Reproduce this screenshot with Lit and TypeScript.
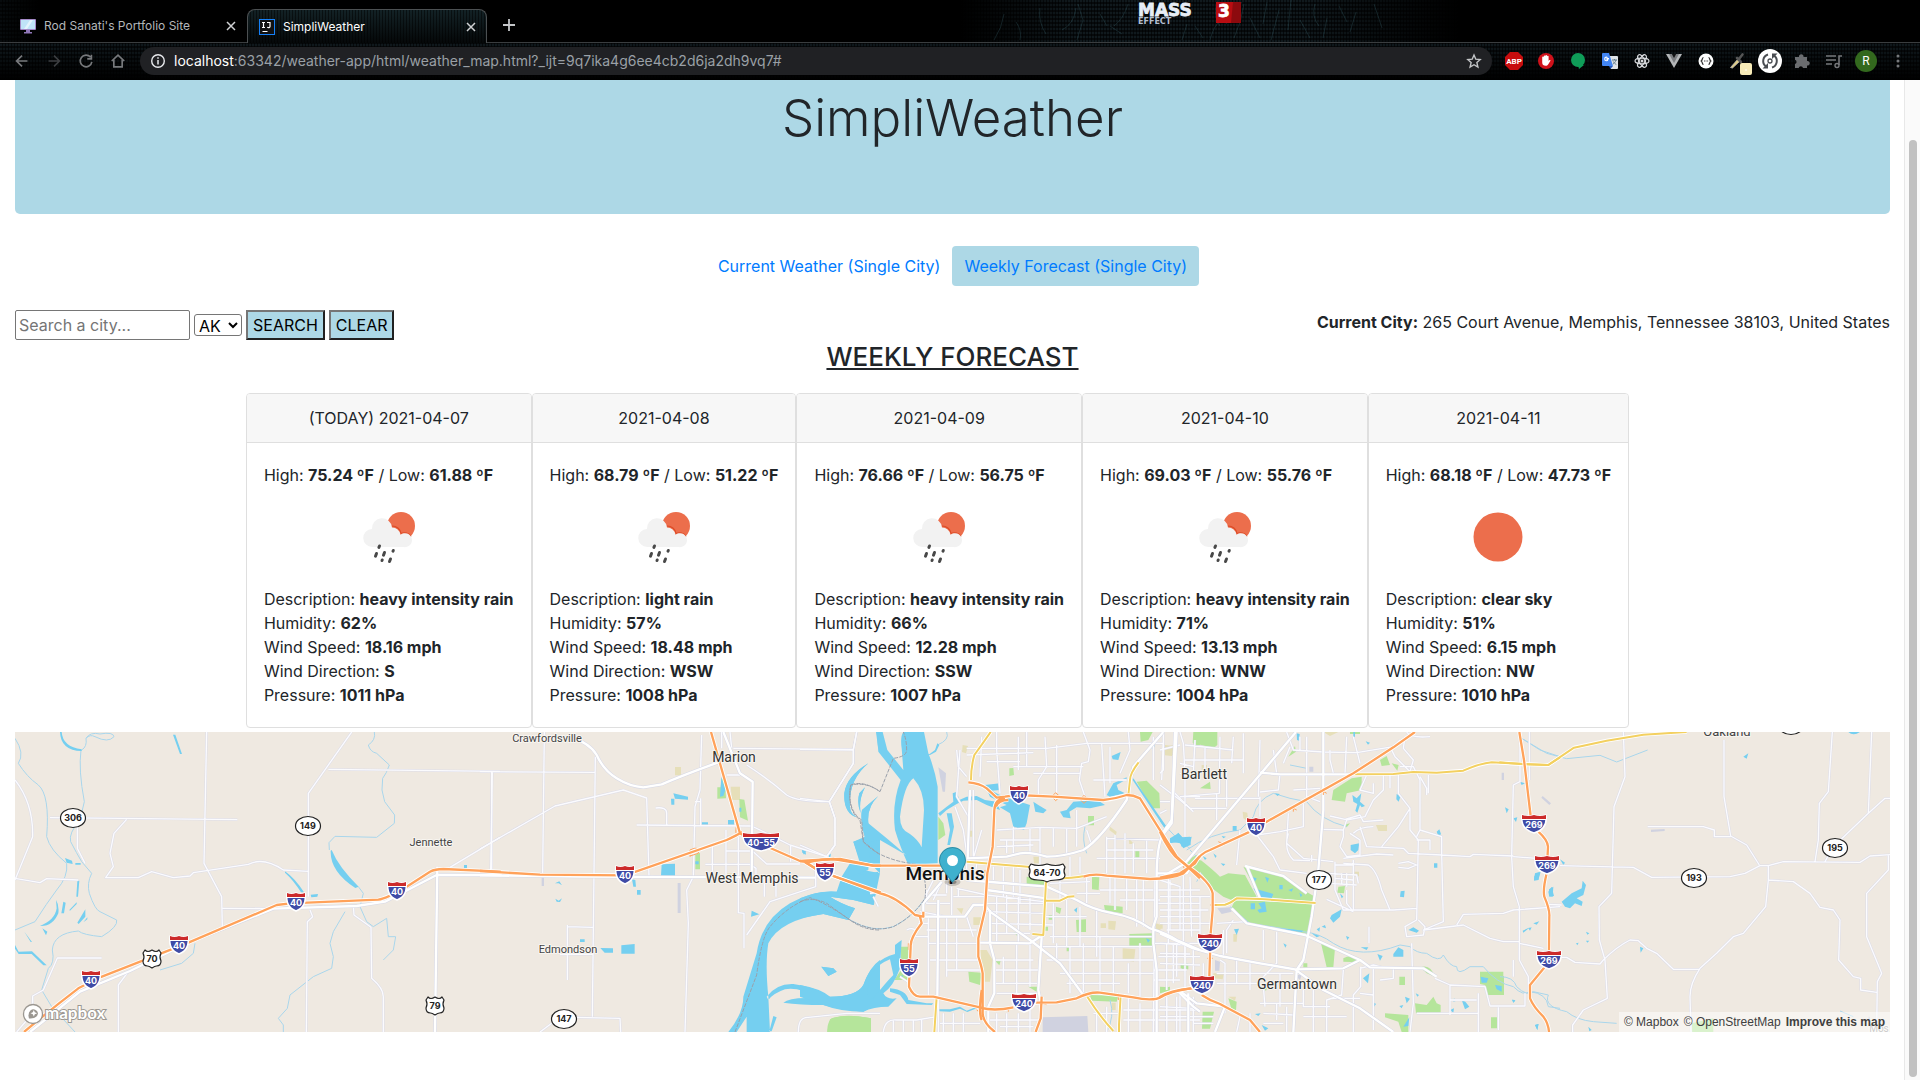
import { LitElement, html, svg, css } from "lit";
import { customElement } from "lit/decorators.js";
import { classMap } from "lit/directives/class-map.js";

interface Day {
  title: string;
  high: string;
  low: string;
  icon: "rain" | "sun";
  description: string;
  humidity: string;
  wind: string;
  direction: string;
  pressure: string;
}

const DAYS: Day[] = [
  { title: "(TODAY) 2021-04-07", high: "75.24", low: "61.88", icon: "rain", description: "heavy intensity rain", humidity: "62%", wind: "18.16 mph", direction: "S", pressure: "1011 hPa" },
  { title: "2021-04-08", high: "68.79", low: "51.22", icon: "rain", description: "light rain", humidity: "57%", wind: "18.48 mph", direction: "WSW", pressure: "1008 hPa" },
  { title: "2021-04-09", high: "76.66", low: "56.75", icon: "rain", description: "heavy intensity rain", humidity: "66%", wind: "12.28 mph", direction: "SSW", pressure: "1007 hPa" },
  { title: "2021-04-10", high: "69.03", low: "55.76", icon: "rain", description: "heavy intensity rain", humidity: "71%", wind: "13.13 mph", direction: "WNW", pressure: "1004 hPa" },
  { title: "2021-04-11", high: "68.18", low: "47.73", icon: "sun", description: "clear sky", humidity: "51%", wind: "6.15 mph", direction: "NW", pressure: "1010 hPa" },
];

/* ---------- Browser frame ---------- */

const EXTENSIONS = [
  { label: "Adblock Plus", art: svg`<path d="M7 3h8l5 5v8l-5 5H7l-5-5V8z" transform="translate(1 0)" fill="#c70d0e"/><text x="12" y="15" text-anchor="middle" font-family="Roboto, sans-serif" font-weight="700" font-size="8" fill="#fff">ABP</text>` },
  { label: "AdBlock", art: svg`<circle cx="12" cy="12" r="8" fill="#d0121b"/><path d="M8.200 12V8.200a.8.8 0 0 1 1.600 0V7.300a.8.8 0 0 1 1.600 0v-.5a.8.8 0 0 1 1.600 0v.8a.8.8 0 0 1 1.600 0v4.400l.8-.9c.8-.5 1.300.2.9.8l-2.200 3.600c-.5.9-1.200 1.200-2.400 1.200-2.200 0-3.500-1.200-3.500-3.300z" fill="#fff"/>` },
  { label: "Hangouts", art: svg`<circle cx="12" cy="11" r="7" fill="#0f9d58"/><path d="M12 16h6l-5 4z" fill="#0f9d58"/>` },
  { label: "Google Translate", art: svg`<path d="M9 7h10a1 1 0 0 1 1 1v11a1 1 0 0 1-1 1h-6z" fill="#dfe3e8"/><path d="M5 4h6l4 13H5a1 1 0 0 1-1-1V5a1 1 0 0 1 1-1z" fill="#4285f4"/><path d="M11 17h4l-2.500 3z" fill="#2456b8"/><path d="M11 9.500H9v1h.9c-.2.8-.7 1.200-1.500 1.200-1 0-1.700-.8-1.700-1.800s.7-1.800 1.700-1.800c.4 0 .8.2 1.100.5" fill="none" stroke="#fff" stroke-width="1.100"/><path d="M14 11h5M16.500 10v1M18 11c-.5 2-2 3.500-3.200 4.200M15.300 12.500c.6 1.300 2 2.500 3 3" fill="none" stroke="#5f7a8a"/>` },
  { label: "React Developer Tools", art: svg`<g fill="none" stroke="#d8dadd" stroke-width="1.200"><ellipse cx="12" cy="12" rx="7" ry="2.800"/><ellipse cx="12" cy="12" rx="7" ry="2.800" transform="rotate(60 12 12)"/><ellipse cx="12" cy="12" rx="7" ry="2.800" transform="rotate(120 12 12)"/></g><circle cx="12" cy="12" r="1.500" fill="#d8dadd"/>` },
  { label: "Vue.js devtools", art: svg`<path d="M4 5h16l-8 14z" fill="#b4b6b8"/><path d="M7 5h10l-5 9z" fill="#7b7d80"/><path d="M9.800 5h4.400L12 9z" fill="#111"/>` },
  { label: "JSON Formatter", art: svg`<circle cx="12" cy="12" r="7.500" fill="#fff"/><path d="M9.500 8.500c-1.500 0-.8 2.500-2.300 3.500 1.500 1 .8 3.500 2.300 3.500M14.500 8.500c1.500 0 .8 2.500 2.300 3.500-1.500 1-.8 3.500-2.300 3.500" fill="none" stroke="#333" stroke-width="1.200"/><path d="M10 12h.9M11.600 12h.9M13.200 12h.9" stroke="#333"/>` },
  { label: "Eye dropper", art: svg`<path d="m4.500 18.500 7-8 2 2-7 6.500z" fill="#e3cf85" stroke="#bbb" stroke-width=".8"/><path d="m11 9 4 4M12.500 10.500l4-5" stroke="#555" stroke-width="2.600" stroke-linecap="round"/><rect x="14" y="14" width="12" height="12" rx="2" fill="#f8ecb8"/><path d="M19 21h2" stroke="#fff"/>` },
  { label: "Session restore", art: svg`<circle cx="12" cy="12" r="12" fill="#fff"/><g fill="none" stroke="#4a4d52" stroke-width="2"><path d="M10 5.500a6.800 6.800 0 0 0-2 12M14 18.500a6.800 6.800 0 0 0 2-12"/></g><path d="M4.500 19.500H10V14zM19.500 4.500H14V10z" fill="#4a4d52"/><circle cx="12" cy="12" r="2" fill="none" stroke="#4a4d52" stroke-width="1.300"/>` },
  { label: "Extensions", art: svg`<path d="M5 8h4a2.300 2.300 0 1 1 4.500 0H17v4a2.300 2.300 0 1 1 0 4.500V19h-4a2.200 2.200 0 0 0-4.300 0H5v-4a2.200 2.200 0 0 0 0-4.200z" fill="#6b6d70"/>` },
  { label: "Media controls", art: svg`<path d="M4 7h10M4 11h10M4 15h6" stroke="#77797c" stroke-width="1.600"/><path d="M17 16V7h3" fill="none" stroke="#77797c" stroke-width="1.600"/><circle cx="15" cy="16.500" r="2" fill="none" stroke="#77797c" stroke-width="1.400"/>` },
  { label: "Profile", art: svg`<circle cx="12" cy="12" r="11" fill="#33691e"/><text x="12" y="16" text-anchor="middle" font-family="Roboto, sans-serif" font-size="12" fill="#fff">R</text>` },
  { label: "Menu", art: svg`<g fill="#77797c"><circle cx="12" cy="7" r="1.500"/><circle cx="12" cy="12" r="1.500"/><circle cx="12" cy="17" r="1.500"/></g>` },
];

const NAVIGATION = [
  { label: "Back", color: "#77797c", d: "M18.500 12H6M12 5.500 5.500 12l6.500 6.500" },
  { label: "Forward", color: "#3c3e41", d: "M5.500 12H18M12 5.500l6.500 6.500-6.500 6.500" },
  { label: "Reload", color: "#77797c", d: "M17.500 7.500A7 7 0 1 0 19 13M18.500 4.500v5h-5" },
  { label: "Home", color: "#77797c", d: "M4.500 12 12 5l7.500 7M7 10.500V19h10v-8.500" },
];

@customElement("browser-frame")
class BrowserFrame extends LitElement {
  static styles = css`
    :host { display: block; font-family: Inter, "Liberation Sans", sans-serif; color: #e8eaed; }
    .frame {
      position: relative;
      background:
        linear-gradient(90deg, rgba(0,0,0,.55), #000 2%, #000 50%, transparent 56%, transparent 68%, #000 76%) 0 0 / 100% 42px no-repeat,
        linear-gradient(#0000, #000) 0 43px / 100% 37px no-repeat,
        repeating-linear-gradient(90deg, #0000 0 2px, rgba(0,0,0,.6) 2px 3px),
        repeating-linear-gradient(#0000 0 2px, rgba(0,0,0,.6) 2px 4px),
        #10191d;
    }
    svg { display: block; }
    button { border: 0; background: none; padding: 0; font: inherit; color: inherit; }
    .scratches { position: absolute; right: 27%; top: 0; }
    .logo { position: absolute; left: 59%; top: 0; margin-left: 4px; }
    .tabs { position: relative; display: flex; align-items: flex-end; height: 42px; border-bottom: 1px solid #3a3d3f; }
    .tab { display: flex; align-items: center; box-sizing: border-box; width: 247px; height: 33px; padding: 0 10px 0 20px; gap: 8px; font-size: 12px; color: #b4b7ba; }
    .tab.active {
      width: 240px; height: 34px; padding: 0 9px 0 11px; margin-bottom: -1px; color: #fff;
      border: 1px solid #4c5052; border-bottom: 0; border-radius: 8px 8px 0 0;
      background: repeating-linear-gradient(90deg, #0000 0 2px, rgba(0,0,0,.5) 2px 3px), linear-gradient(#132226, #050809);
    }
    .title { flex: 1; white-space: nowrap; }
    .plus { margin: 0 0 10px 15px; }
    .toolbar { display: flex; align-items: center; height: 36px; padding: 0 6px 1px; }
    .item { display: grid; place-items: center; width: 32px; height: 36px; }
    .item svg { overflow: visible; }
    .address { flex: 1; min-width: 0; display: flex; align-items: center; gap: 8px; height: 28px; margin: 0 6px; padding: 0 6px 0 10px; border-radius: 14px; background: #202124; }
    .url { flex: 1; min-width: 0; overflow: hidden; white-space: nowrap; font-size: 14px; color: #9aa0a6; }
    .host { color: #fff; }
  `;

  close() {
    return html`<button aria-label="Close tab"><svg width="12" height="12" viewBox="0 0 12 12"><path d="m2 2 8 8m0-8-8 8" stroke="#d0d2d4" stroke-width="1.500"/></svg></button>`;
  }

  render() {
    return html`
      <header class="frame">
        <svg class="scratches" width="420" height="42" viewBox="0 0 420 42" fill="none" stroke="#4d8793" stroke-opacity=".32" stroke-width=".7">
          <path d="M12 40q8-12 10-26M34 22q6 8 4 18M58 8q-2 14 6 26M80 30q12-6 14-22M96 4l5 16M101 20l-6 20M118 14l7 12M128 26l12 8M146 4q-4 14-14 22M205 24l-5 16M213 26l8 12M228 40q4-16 12-20M236 0q-6 14 2 26M244 24l16-22M262 4q-2 16-10 34M268 18l10 20M285 2l-4 22M297 10l-8 30M309 0l-3 30M318 20l10 18M333 4q-4 12 4 22M345 18l-4 20M357 6l8 16M374 12l-6 20M392 4l8 24" />
        </svg>
        <svg class="logo" width="110" height="28" viewBox="0 0 110 28" role="img" aria-label="Mass Effect 3">
          <rect x="79" y="2" width="25" height="21" fill="#b80d12" />
          <path d="M96 2h8v21h-10z" fill="#8c0a0e" />
          <g font-family="DejaVu Sans, sans-serif" font-weight="700">
            <text x="1" y="16" font-size="17" fill="#e8eef6" stroke="#e8eef6" stroke-width=".8">MASS</text>
            <text x="1" y="24" font-size="8" fill="#b4bfd0">EFFECT</text>
            <text x="81" y="17" font-size="17" fill="#fff" stroke="#fff" stroke-width=".8">3</text>
          </g>
        </svg>
        <div class="tabs">
          <div class="tab">
            <svg width="16" height="16" viewBox="0 0 16 16"><rect x="0" y="1" width="16" height="11" rx="1" fill="#a58ac8"/><rect x="1" y="2" width="14" height="9" fill="#bfe3f8"/><path d="M4 11 10 2h3L7 11z" fill="#e2f3fd"/><path d="M6 12h4v2h2v1.500H4V14h2z" fill="#9077b8"/></svg>
            <span class="title">Rod Sanati's Portfolio Site</span>${this.close()}
          </div>
          <div class="tab active">
            <svg width="16" height="16" viewBox="0 0 16 16"><rect x=".5" y=".5" width="15" height="15" fill="#111" stroke="#1580f8"/><path d="M3 3.500h3M4.500 3.500v5M3 8.500h3M8 3.500h3v4c0 1.200-1.500 1.500-2.800.8M3.500 12.500h5" fill="none" stroke="#fff" stroke-width="1.200"/></svg>
            <span class="title">SimpliWeather</span>${this.close()}
          </div>
          <button class="plus" aria-label="New tab"><svg width="14" height="14" viewBox="0 0 14 14"><path d="M7 1v12M1 7h12" stroke="#c4c6c8" stroke-width="1.800"/></svg></button>
        </div>
        <div class="toolbar">
          ${NAVIGATION.map((n) => html`<button class="item" aria-label=${n.label}><svg width="20" height="20" viewBox="0 0 24 24" fill="none" stroke=${n.color} stroke-width="2"><path d=${n.d} /></svg></button>`)}
          <div class="address">
            <svg width="16" height="16" viewBox="0 0 16 16"><circle cx="8" cy="8" r="6.300" fill="none" stroke="#e8eaed" stroke-width="1.400"/><path d="M8 7v4.500M8 4.300v1.500" stroke="#e8eaed" stroke-width="1.500"/></svg>
            <span class="url"><span class="host">localhost</span>:63342/weather-app/html/weather_map.html?_ijt=9q7ika4g6ee4cb2d6ja2dh9vq7#</span>
            <button aria-label="Bookmark this page"><svg width="24" height="24" viewBox="0 0 24 24"><path d="m12 6 1.800 4.200 4.400.4-3.300 3 1 4.400-3.900-2.300L8.100 18l1-4.400-3.300-3 4.400-.4z" fill="none" stroke="#c4c6c8" stroke-width="1.400"/></svg></button>
          </div>
          ${EXTENSIONS.map((e) => html`<button class="item" aria-label=${e.label}><svg width="24" height="24" viewBox="0 0 24 24">${e.art}</svg></button>`)}
        </div>
      </header>`;
  }
}

/* ---------- Forecast card ---------- */

@customElement("day-card")
class DayCard extends LitElement {
  static properties = { day: { attribute: false } };
  declare day: Day;

  static styles = css`
    :host { display: block; border: 1px solid #dfdfdf; border-radius: 4px; overflow: hidden; background: #fff; }
    .head { padding: 12px 16px; text-align: center; background: #f7f7f7; border-bottom: 1px solid #dfdfdf; }
    .body { padding: 20px 17px; white-space: nowrap; }
    .icon { display: block; margin: 0 auto; }
    b { font-weight: 700; }
  `;

  picture() {
    return this.day.icon === "sun"
      ? svg`<circle cx="50" cy="50" r="24.500" fill="#ec6e4c"/>`
      : svg`
        <circle cx="62" cy="39" r="14" fill="#ec6e4c"/>
        <path d="M53 39a9 9 0 0 1 9 7.500 8 8 0 0 1 10 3" fill="none" stroke="#dd4b26" stroke-width="1.200"/>
        <path d="M33.500 60a9 9 0 0 1-.5-18 9.800 9.800 0 0 1 20-1.500 8.500 8.500 0 0 1 8.500 7.300 7 7 0 1 1 3 12.200z" fill="#f2f2f2"/>
        <g stroke="#484848" stroke-width="3" stroke-linecap="round"><path d="m40.500 59-.6 1.400M37.500 66.500l-1 2.700M45.500 65.500l-1 2.700M54.300 63.500l-.3.700M43.200 73l-.2.500M51.500 72l-1 2.500"/></g>`;
  }

  render() {
    const d = this.day;
    return html`
      <div class="head">${d.title}</div>
      <div class="body">
        <div>High: <b>${d.high} ºF</b> / Low: <b>${d.low} ºF</b></div>
        <svg class="icon" width="100" height="100" viewBox="0 0 100 100" role="img" aria-label=${d.description}>${this.picture()}</svg>
        <div>Description: <b>${d.description}</b></div>
        <div>Humidity: <b>${d.humidity}</b></div>
        <div>Wind Speed: <b>${d.wind}</b></div>
        <div>Wind Direction: <b>${d.direction}</b></div>
        <div>Pressure: <b>${d.pressure}</b></div>
      </div>`;
  }
}

/* ---------- Map ---------- */

/* Each sheet is drawn at three units to the pixel, starting at its own x. */
interface Sheet {
  x: number;
  park?: string;
  sand?: string;
  grey?: string;
  water?: string;
  stream?: string;
  minor?: string;
  road?: string;
  trunk?: string;
  rail?: string;
  ramp?: string;
  motorway?: string;
}

const SHEETS: Sheet[] = [
  {
    x: 0,
    stream:
      "M45 25Q75 70 55 100Q80 140 115 165Q150 195 140 320Q150 360 200 400Q205 440 170 480Q140 520 105 575L45 600M243 60Q235 120 253 215L240 270Q205 310 212 335Q230 370 245 395L275 430Q260 460 268 490Q285 540 300 545L350 570Q355 590 305 620Q250 615 235 603Q160 610 157 660Q165 700 145 715L125 780L155 830L225 906M245 60Q262 50 258 25Q270 5 300 12Q340 5 342 20Q325 40 285 20Q270 12 258 25M1123 6Q1128 30 1105 45Q1110 65 1130 70L1168 105Q1160 130 1148 145L1146 180L1154 215L1184 255L1183 280L1130 322L1005 319L987 338L988 360M1075 470L1090 490L1080 530L1100 575L1120 590L1160 565L1165 620L1187 620L1180 660L1150 690M1035 545L1000 605L990 640L1000 680L995 715L940 740L870 795L862 835L835 865L850 885V906M585 640L580 670L545 700L480 720",
    water:
      "M180 6h5Q188 50 245 58V63Q182 62 180 6ZM519 14h7L546 72H540ZM855 424Q885 445 912 487L903 487Q880 450 855 428ZM995 360Q1015 410 1076 470L1066 474Q990 425 992 362ZM195 384 216 392 218 402 200 398ZM226 399h16v5h-16ZM232 452h6L234 500H229ZM168 510Q178 525 175 550Q158 590 120 588Q165 570 170 535ZM190 515 197 518 192 550 184 550ZM208 540 230 517 230 522 210 542ZM256 538 256 560 236 582 232 578ZM250 577 262 562 262 568ZM127 595 142 605 138 616ZM73 605 96 636 92 636ZM45 645 56 665 96 664 140 706 130 706 95 672 56 672 45 656ZM932 494 954 492 952 500 934 502ZM1392 405h9v9h-9Z",
    minor:
      "M45 150Q100 220 98 320L45 450M45 445L120 458L140 446L235 450M150 263L712 269M620 6L612 400L665 500L667 590M380 268L342 310L330 370L340 410L317 443L415 443L455 425L520 443L570 438L580 428L745 403Q790 380 850 420L925 424M1055 6L925 190V500M985 118L1500 124M1475 126V418M1350 412L1500 322M668 535L820 536M232 290V355L255 400M305 684H172L130 780L98 798V850L50 906M385 725L355 765V906M930 540L938 560L922 575L919 906M1060 525L1062 555L1113 592L1115 745Q1150 775 1150 800V906",
    road: "M90 906L240 785L390 723L560 640L820 536L1070 528L1155 515L1310 435H1505M1312 410L1305 906",
    motorway: "M72 906Q150 840 235 775L300 742L560 640L830 525L870 520L1135 509Q1160 505 1220 470L1290 425Q1305 417 1330 417L1502 425",
  },
  {
    x: 480,
    park:
      "M725 145 735 150 738 205 712 206 712 172 722 172ZM778 207 793 209 804 272 780 262ZM646 375 660 368V418H646ZM1055 865Q1100 850 1172 865V906H1042Q1040 880 1055 865Z",
    sand: "M752 170h28v40h-24ZM585 111h18v25h-18ZM738 430h18v10h-18Z",
    grey: "M593 459h9v90h-9ZM185 442h7v26h-7Z",
    water:
      "M580 190 624 200V209L585 206ZM573 206h10v18h-9ZM664 277h20v7h-20ZM744 270h18v14h-18ZM778 233h6v12h-6ZM724 140 730 160 736 180 730 198 720 200ZM646 394h10v9h-10ZM545 403 585 401V437H543ZM456 448 466 450 468 470 460 470ZM471 480h11v14h-11ZM300 628h14v8h-14ZM361 654 399 655V668H374ZM424 646 464 642V671H424ZM815 542 838 553 813 560ZM967 360 976 357 978 374 967 368ZM1045 375 1052 372 1050 384ZM225 460 238 454 246 466 236 460ZM226 506 236 512 246 505 240 516 230 515ZM1165 100Q1105 150 1110 230Q1110 250 1130 262Q1090 250 1093 190Q1098 140 1165 100ZM1155 172Q1135 210 1142 250Q1130 220 1138 190ZM1195 198Q1160 230 1165 280L1200 330V430L1150 420 1120 335 1155 320Q1140 270 1146 240ZM1200 6h-12L1194 50 1200 60ZM1110 400 1175 405 1200 430 1180 525 1120 510 1050 500Q1080 520 1125 535L1105 570 1030 552Q900 570 865 640Q855 700 865 800L870 906H745Q790 850 790 800L830 670Q845 570 930 520Q1000 480 1070 485L1085 440ZM860 800Q890 760 940 762Q1000 770 1050 800Q1130 800 1150 765Q1170 710 1200 690V815L1150 845Q1080 840 1030 825Q960 825 910 818Q930 800 1010 805Q960 770 915 778Q880 790 865 810ZM1024 710 1060 715 1070 725 1045 738ZM880 858 890 862 875 904 868 904ZM800 860 770 906H800Z",
    minor:
      "M0 125L345 127M193 6L188 435M37 125L32 420M0 357L225 228L430 180L500 204L507 440M346 80L337 860M470 285L815 288M527 234Q560 230 560 250V285M665 15L660 180L645 230L640 440L620 480L625 580L615 906M662 205V285M645 215H660M760 55L1120 58L1130 6M1120 58V100L1048 215Q950 215 920 195Q870 150 800 105M740 135H780M725 6V55M750 6L755 55M815 288L880 320L930 345L1040 380L1065 345V265L1048 215M676 403H810L828 415V440M697 350V435M738 300V440M775 320V548L792 550V655M740 363H810M820 365L860 402H960M932 345V395M853 440V500M888 440V500M1007 420V470L870 515L800 615M262 585V750M262 590L338 592M240 674L340 672M290 862L420 865L422 906M180 906L215 880M955 906Q955 860 985 862L1100 850H1200",
    road: "M270 20Q330 40 350 75Q370 120 410 145Q450 170 490 172L545 163Q610 135 715 97M0 436L300 440L1005 443M730 6L780 130L818 155L815 440",
    rail: "M765 906L830 735Q845 620 870 590Q920 530 990 503Q1040 520 1110 570Q1150 600 1200 600M1200 185Q1150 150 1112 165Q1100 240 1140 270L1150 335L1200 375",
    ramp: "M768 310Q765 285 778 285M630 380V360Q660 345 655 370L630 378M338 430V440",
    motorway: "M0 423L180 434L435 436L740 330Q785 310 782 305M693 6L780 310L850 345L960 393L985 397Q1020 387 1080 387L1180 407H1202M975 395L1005 415L1060 438L1202 487",
  },
  {
    x: 800,
    park:
      "M1010 155 1040 152 1078 190 1080 235 1055 235ZM628 115 640 114 642 135 628 138ZM864 258h18v28h-18ZM415 260 430 280 436 315 415 330ZM1006 362h12v22h-12ZM680 440 740 445V470L680 462ZM876 440 898 442 896 480 876 478ZM828 570 858 568V606H830ZM768 530 784 535 780 552 768 545ZM746 555h14v14h-14ZM912 525 968 530V550L915 542ZM988 612 1060 610V650H988ZM1160 390 1200 370V430L1165 420ZM640 606 655 608 652 618ZM303 650 325 650V750H283L303 720ZM505 725 545 728 540 765 508 755ZM585 692 602 692 598 706ZM685 770 712 770 710 785ZM870 795 955 797 950 815 875 812ZM1080 775 1110 770V782L1080 790ZM90 868Q130 850 213 865V906H82ZM1020 6H1058L1045 30 1022 35ZM1180 20h20v25h-20ZM1145 700h20v18h-20ZM800 650h12v14h-12ZM730 590h14v12h-14Z",
    sand:
      "M488 45 504 48 498 70 486 66ZM1095 45 1118 48 1116 78 1095 75ZM508 302h14v18h-14ZM700 380 722 380 718 400 702 400ZM986 325 1002 342 988 342ZM925 572 948 574 945 600 925 598ZM968 655 1006 658 1002 695 968 690ZM1066 580 1085 585 1080 605 1066 605ZM902 580h16v14h-16ZM470 535 490 535 485 552ZM935 818h12v22h-12ZM540 660 560 660 578 690 570 755 555 755 545 700ZM520 562 545 562 540 585 520 585ZM930 290 950 305 948 315 928 300Z",
    grey: "M415 112 438 130 435 185 428 185ZM728 862 862 858 865 906H728Z",
    water:
      "M230 6 248 6 262 60 310 120 305 55Q300 20 310 6H372L385 70Q405 120 413 170V400L325 405Q300 350 285 300Q275 220 302 150L235 65ZM340 145Q312 165 300 260Q300 300 330 312Q355 330 365 352L372 240Q372 180 340 145ZM205 100Q145 150 150 230Q150 250 172 262Q130 250 133 190Q140 140 205 100ZM195 172Q175 210 182 250Q170 220 178 190ZM235 198Q200 230 205 280L260 325 290 350 318 375 240 330 210 335 205 420 150 440 140 430 180 400 160 335 195 325Q180 270 186 240ZM0 505Q55 480 110 485L150 440 235 425 222 525 160 510 90 500Q120 520 165 535L145 570 70 552 0 565ZM0 765Q60 775 90 800Q170 800 190 765Q215 690 285 672L285 645 305 630 300 715Q280 770 250 790Q260 810 290 805L265 830Q220 830 190 845Q120 845 70 825L0 800ZM270 688Q205 715 205 770 195 805 220 805 255 760 280 735ZM64 710 100 715 110 725 85 738ZM270 775Q320 780 325 810L380 820 400 820 395 825 320 822 300 795 270 785ZM440 250 455 250 462 290 450 345 442 345 450 300ZM415 250 440 230 460 215 458 190 470 185 478 210 500 200 530 198 555 210 590 215 600 240 560 225 530 210 490 212 470 222 440 240 420 258ZM555 165 600 160V180L575 182 610 200 660 215 690 225 680 280 672 300 640 290 630 250 600 232 620 225 600 215 570 200ZM700 215 715 225 740 240 730 250 706 245ZM780 245 800 240 820 215 860 212 900 215 915 225 870 235 830 232 808 245 812 265 790 262ZM920 195 940 160 980 142 980 148 950 165 955 180 975 190 930 200ZM935 78 962 66 955 90 938 88ZM1055 55 1065 45 1060 58ZM1000 145 1100 290 1095 296 998 150ZM1115 330 1135 308 1150 325 1175 320 1170 345 1150 355 1140 340 1115 335ZM385 75 405 60 412 40 418 45 408 65 390 75ZM822 540 832 532 830 548ZM1038 625 1050 630 1044 638ZM5 360 18 362 12 374ZM85 375 92 372 90 384ZM415 838 450 838 480 830 500 842 530 830 532 834 502 846 480 836 450 845 418 844ZM297 740 310 735 305 745Z",
    stream: "M412 45Q450 30 440 6M855 290Q845 330 860 370M930 810Q945 860 920 906M1170 360L1190 380M0 515Q80 500 150 570Q220 610 280 590Q340 560 375 505",
    minor:
      "M0 58L160 60L170 6M160 60V100L88 215Q40 210 0 205M88 215L105 265V345L80 380L0 345M470 60L475 110L500 140M545 20L540 140M590 6V60L600 190M655 20V120M680 6V110M500 55H740L860 40H1090M500 75L700 68M560 95H660M640 110H850M735 20L740 110L715 150V200M770 45V190M850 6L870 60L865 95L845 100L838 150L855 200M905 40L915 200M930 50V160M985 6L990 60L960 130M700 130H840M880 150H980M1140 130L1200 150M1060 150V20M1090 40L1085 150M1140 200H1200M1155 150V320M1115 180L1180 245M480 60L470 200L505 260V380M465 230L490 300L500 370M520 180V380M545 300L520 385M590 300L720 292L830 295L920 260M640 290V370M600 330H720M720 292V440M690 295V370M760 295V350M800 295V370M830 240V350M860 300L875 345M590 350L700 345M620 330V370M920 320V430M945 315V540M975 310V430M920 325L1080 330M1000 340V430M1040 330V430M920 360H1060M890 385H1080M840 380V430M810 380V440M860 440V520M930 440V520M980 440V540M1010 440V590M780 440V510M830 490H900M750 460L870 455M900 480H1060M960 510H1080M1030 450V590M1065 440L1060 906M1105 440V640M1150 430V640M1070 480H1200M1070 520H1200M1080 560H1200M1100 600H1200M1020 640V800M500 400V450M530 400L525 450M580 410V450M610 410V500M640 410V500M660 420V520M470 475L560 495L730 515M460 500H560M560 520H730M560 545L730 550M590 500V640M620 495V610M655 500V640M690 500V600M570 610H690M570 580L760 585M730 560H860M760 520V640M800 510V650M840 530V650M890 540V680M750 620H1060M720 650H1060M770 640V690M810 650V790M850 640V790M900 620V790M940 650V790M985 700V790M740 690H1060M780 730H1060M800 760H960M580 690H700M585 720H720M585 760H715M610 680V760M650 640V790M690 640V770M590 790H720M360 545L440 560M380 480V520H450M395 495H440M400 450L375 500M425 455L400 510M440 460V490M455 470V560M475 475V500M415 510V906M385 560V800M440 560V740M470 560V720M500 560L520 620M380 600H530M385 640H530M390 690H535M440 720H540M355 580H385M345 620H385M300 740L330 760M320 600Q340 590 350 605M250 906Q255 865 290 870H350L410 860M280 870V906M310 870V906M340 870V906M365 870V906M430 850V906M460 850V906M490 850V906M420 880H540M590 850L590 906M620 850V906M655 850V906M690 830V906M570 870H720M600 890H700M890 850V906M920 830V906M985 800V906M1020 820V906M1100 800V906M1130 800V906M880 850H960M970 840H1200M970 870H1200M1060 640H1200M1075 680H1200M1060 720H1160M1060 750H1140M1100 640V780M1130 640V740M1155 640V700M220 500L235 530M210 490L240 485",
    road:
      "M1090 6L1000 110L980 210Q900 330 850 360Q790 380 740 380Q690 365 660 370L620 380L500 385M510 180L503 385M1130 6L1115 280L1085 320Q1070 360 1070 440V560L1060 590V640L1070 720V906M370 520L425 455M370 515V560H495L520 525H555L570 545L690 630L780 700L850 795M570 540V640L583 690V790L565 830V906M540 638L690 640L720 620M415 510L412 800M500 450L740 470L830 510Q880 540 940 550Q1000 560 1050 595Q1100 610 1130 630L1200 660M560 480L740 505M725 620L715 780L725 830M1070 430H1160L1200 370M1130 780L1180 830L1200 845",
    trunk: "M572 6Q545 45 523 75Q513 110 513 150M500 395L700 412M790 445Q840 442 870 435M738 455L730 615L697 612M735 512H780L805 500L823 499M1016 97Q990 130 990 150L985 195M862 800Q900 860 940 903M962 795L957 885V906M410 800L403 906",
    rail: "M0 515Q40 500 80 520L150 570Q220 610 280 590Q340 560 375 505Q380 470 370 430L350 403Q240 390 190 335L185 270Q140 240 152 165Q200 155 240 185L280 85Q320 80 320 60Q320 30 310 6",
    ramp: "M580 195L610 210M755 200L767 188L780 200L767 212ZM840 208L852 196L864 208L852 220ZM970 196Q985 185 995 196M530 835Q545 820 552 835Q545 855 530 840M1150 410Q1165 398 1180 412Q1165 428 1150 412M325 640V660M555 420V440M955 790V810M625 830V845M710 818L740 824M238 485L248 495M838 798Q860 785 870 800",
    motorway:
      "M0 393L100 387L218 407H440M15 397L45 415L100 438L240 490Q290 500 345 555L370 560V545M360 560L365 580Q330 625 332 650L327 770Q340 800 360 800H400L540 832Q580 845 640 832M505 157Q540 160 560 175L590 203L615 200L650 195L760 200L910 210Q950 205 980 195Q1000 195 1020 205L1130 380L1165 412L1200 445M615 205Q585 205 583 240L578 350L562 430L555 540L535 625V680Q545 710 548 730V850Q550 880 585 906M545 780Q535 850 545 870M625 210Q595 210 588 230M850 440Q880 430 920 437L1050 447Q1120 445 1150 430L1200 378M700 818L770 817L830 805Q870 785 900 788L1000 802Q1060 815 1085 800Q1120 780 1200 772M725 800L722 865L707 906",
  },
  {
    x: 1160,
    park:
      "M100 6H172V45L160 55 98 38ZM120 175 150 155 152 177ZM122 390Q160 420 180 440L205 430 255 435 290 500 220 512 190 500 150 470Q130 430 105 410ZM250 410 370 438 430 480 465 500 460 515 300 500ZM225 510 465 520 445 612 310 590 260 578 215 532ZM385 80 405 48 408 65ZM520 180 575 145 605 140V180L560 190 555 215 515 210ZM660 90 680 78 690 105 665 108ZM550 285 570 280 560 292ZM535 470 555 468 552 490 532 488ZM483 640 525 655 520 712 500 712ZM550 685Q575 670 600 690L595 697 550 695ZM782 712Q810 700 825 740L800 730ZM960 725 1030 725V795H980L975 765 960 762ZM718 740h17v25h-17ZM765 820 800 825 820 800 830 820 842 825V850H768ZM675 850 745 855V906H725L715 875 675 862ZM993 862h18v33h-18ZM128 845 162 845 150 896 126 896ZM205 805 230 815 228 840 215 840ZM430 700h12v12h-12ZM62 700h20v15h-20ZM0 770 30 772 0 790ZM300 770 322 772 318 782ZM695 100 716 105 712 122ZM570 6h30v6h-30Z",
    sand:
      "M15 50 40 45 38 76 15 76ZM648 285 681 285V303H655ZM583 425h14v14h-14ZM220 612 232 612 230 635 220 635ZM248 245 262 248 265 275 250 265ZM490 6H535L510 18ZM125 105h16v20h-16ZM0 582h8v14h-8ZM160 730 192 730 188 748 160 745ZM205 800 228 800 225 812Z",
    grey: "M1025 128h7v22h-7ZM1148 198 1173 220 1168 225 1144 203ZM172 535 210 532 215 545 185 552ZM165 690 180 695 178 722 165 722ZM448 110h12v15h-12ZM405 735 425 735 420 750Z",
    water:
      "M410 10 419 12 417 32 411 30ZM617 34 630 38 624 44ZM710 192 722 198 716 215 709 208ZM345 190 360 192 352 198ZM218 288 230 288V302H218ZM30 325 55 310 65 322 90 320 92 345 65 350 60 335 30 340ZM0 270 20 290 16 296 0 274ZM577 195 590 205 604 190 600 215 615 228 605 232 600 225 592 248 586 242 592 222 580 215ZM572 345 598 340 595 360 585 370 572 360ZM830 305 838 298 843 312 836 320ZM822 400h10v13h-10ZM722 484 734 482 732 502 720 500ZM280 475 340 492 335 505 295 500ZM275 440 290 445 285 455ZM315 440 327 445 322 458ZM358 465h10v13h-10ZM385 480 400 475 395 485ZM418 488 427 495 422 502ZM295 520 315 515 320 545 298 548 292 540 305 535ZM272 520 285 520 285 538 272 538ZM540 490 550 500 545 505ZM515 555 545 538 540 560 520 578 510 565ZM485 590 495 585 498 595ZM470 598 480 592 478 605ZM455 610 480 618 470 622ZM558 618 568 622 562 630ZM602 652 625 652 620 660ZM652 672 668 678 660 692ZM700 672 715 652 730 660V680H700ZM745 600 760 592 777 602 770 608ZM222 598 237 596 230 615ZM370 640 380 645 376 653ZM1035 232 1046 238 1040 250ZM1060 265 1072 262 1068 276ZM1080 155 1095 160 1085 165ZM1125 430 1140 425 1135 450 1122 450ZM1165 485 1175 470 1182 498 1168 500ZM1088 602 1110 592 1100 600 1090 608ZM1120 580 1138 574 1130 584ZM609 745 628 730 624 760ZM638 815 648 822 642 830ZM735 800 750 806 740 820ZM718 828 730 825 725 835ZM767 790 777 795 772 800ZM730 890 748 862 745 888ZM870 840 882 835 880 848ZM905 810 916 815 928 830 915 838ZM882 805 890 812 880 815ZM1125 885 1136 882 1132 900ZM285 852 302 850 295 858ZM305 885 325 895 315 902ZM160 370 170 378 166 384ZM182 400 196 402 190 408ZM128 378 140 385 135 390ZM962 740 985 745 980 758 965 758ZM1005 765 1025 768 1025 785 1010 778ZM1057 808 1066 812 1060 818ZM580 6h5v15h-5ZM185 318 198 320 190 325ZM350 595 395 598 430 602 425 606 350 600Z",
    stream:
      "M0 270L60 335L90 355M80 360Q150 310 240 300L280 260Q290 210 340 190L390 205L440 215Q480 270 560 290M390 105L440 115M210 530L270 580L430 605Q480 610 520 640Q600 690 720 645L750 650Q770 670 800 670Q840 700 850 675Q870 710 890 710Q890 740 930 710L970 710Q1010 760 1060 770Q1090 800 1110 785Q1160 790 1165 830L1200 835M1085 25L1140 60L1200 80M110 455L125 430",
    minor:
      "M10 6V120L0 130M60 6L70 40L75 130M75 45L220 60M0 60L60 45M105 30L100 130M135 50V120M180 20L178 190L60 200M220 20L215 100M250 10V130M300 30L295 200M75 90H250M0 165L60 210L90 235H200M105 205H300M170 190V270M200 130V230M240 300L230 405M300 200V260M60 100L100 110M340 60L350 130M380 6L400 60L490 66M390 50L370 100M420 20V60M440 20V200L480 215M490 66L590 68M560 20L555 130M580 20L600 100M360 130L355 180L300 186M400 180L480 175M385 250L380 340L430 385L520 395M430 220V290L360 305L290 315L340 380L360 420L440 430M385 310Q370 360 400 390L450 392M455 375V395M510 60V90L520 130M590 68L700 50L720 30M690 50L705 80L750 125L760 90L730 55L735 20M740 6Q750 25 810 20M620 135L600 180L640 190V160M670 135V180L640 210L615 260L560 270L550 300L490 298M690 130V175M715 130V190L750 235L715 290L665 350M720 110H760L780 150V300L770 320M510 258L555 268L600 255L610 275L670 270M780 140L800 175V195M805 135V190M750 235V300L775 330L770 570L735 590L740 620L790 615L795 590L775 570M550 300V320L540 350L560 380L600 375L600 330L570 310M600 290L620 350L730 355L745 370L845 375L930 380L940 373L1060 378M770 330H810V360M780 300L845 320V370L850 575L790 600L910 585L990 625L1030 635H1080M580 310Q600 290 640 290M715 400L745 395L770 405L745 415L715 412M550 385L650 372L700 375M525 395V480L550 540L700 540L770 535M580 390V540M525 405H580M550 400L625 405Q650 420 665 480L690 540M500 430L590 435L595 460M545 430V465M560 430V470M510 460L590 465M525 445L580 450M500 508L580 545M560 480V520L580 545M627 590V640M890 585L910 553L1030 550L1060 540L1200 530M1080 6V155L1060 165L1055 380L1060 470L1078 530V690L1105 740V780M1060 380L1130 385M1078 640L1150 655M600 715L640 705L680 715M640 708V900M602 710V770L580 795V906M550 720L545 795L500 810V906M660 750L700 745V715M755 640L760 820L750 906M770 850H955M955 790V906M990 828H1095V790M825 745L870 765L975 770L990 828M870 765V855M870 810H950M1015 832V900M0 640L80 645M0 670L90 672M0 700L120 705M40 640V760M75 640V780M100 660V780M130 700V760M180 690L195 700V850M170 730H400M170 760H300M230 690V760M270 700V780M310 600V690M350 605V700L310 740M190 600V680M220 570L200 600V670M310 770L315 830M360 730V830M100 800V906M60 790V906M20 800V906M0 830L100 835M0 860H160M100 880H160M240 860L230 906M300 820H400M350 820V870M380 830V906M310 850L400 855M310 880H370M270 850V906M430 760V830H510M460 780V906M430 860H560M400 820H430M0 215H30M0 250L20 240M0 450L60 470V600M90 440L95 620M0 500H150M0 540H145M30 450V600M0 580H150M120 500V620M170 580L260 575M1060 690V740M520 805H600M600 790L640 795",
    road:
      "M408 6L75 400L0 445M45 6L35 270L0 320M300 128L360 133L580 133M490 6V240L475 420L455 560L430 690L410 720L400 906M0 610L100 655L180 678L300 700L405 718L490 780L600 835L700 906M55 780L110 820L195 830L165 906M85 790V906M215 535L260 580L435 615L600 690L630 712L790 715L830 740M405 718L550 715L600 690M260 408L300 505M255 408L370 438L440 490",
    trunk: "M580 133L700 132L760 126L830 128L910 122Q960 100 995 97L1050 100L1165 105L1200 82M160 525L195 524Q210 520 230 505L300 507L467 519",
    ramp: "M480 178L500 190M490 175V195M390 230L410 240M400 225V245M175 335L195 345M150 525L170 525M142 685H158",
    motorway:
      "M765 6L700 52L580 130L320 275L270 305L150 360Q120 370 105 400L88 412L60 430L0 443M0 305Q30 370 60 392L88 412Q150 455 158 490V540L152 610L148 740M-2 802Q30 780 95 775M125 795Q150 812 180 822L270 870L300 906M1078 6L1092 90L1112 258M1135 305Q1163 330 1164 350L1160 430Q1148 480 1153 500Q1170 540 1168 560L1167 660M1155 710L1110 765V805Q1120 830 1150 860Q1165 880 1167 906",
  },
  {
    x: 1500,
    park: "M0 738 12 738V795H0ZM575 880 640 865V906H575Z",
    grey: "M453 299 494 297V303L453 306ZM1105 860h5v10h-5Z",
    water:
      "M185 515 215 490 245 475 248 452 258 465 250 495 230 505 248 515 245 528 225 520 210 535 195 530ZM147 478 160 470 158 500 147 498ZM103 438 122 425 115 450 102 452ZM180 388 195 398 190 405ZM228 640 236 638 232 646ZM258 605 268 610 262 614ZM258 632 268 632 262 638ZM420 650 430 655 422 668ZM730 80 745 70 740 86ZM1045 6H1080Q1060 20 1045 6ZM105 885 115 882 112 900ZM265 890 275 900 268 904ZM36 810 46 810 40 818ZM85 595 95 592 90 602Z",
    stream: "M65 25L140 70L200 86L300 76L350 96L443 60M0 740Q40 740 50 770Q80 800 100 785L145 795Q130 830 200 845Q230 870 280 875L350 880M1020 843L1060 860",
    minor:
      "M370 6L375 140L342 230L335 490L297 530L298 630L315 690L322 805L250 840L218 885V906M180 407L400 412L455 442L690 440L735 430L780 407H805L850 395L1080 397L1110 378L1170 374M672 30V200L692 318L740 345L778 405M443 290H610L643 300V320H692M805 407V450L880 455L930 490L960 532L1000 540L1020 570L1016 690L1060 740L1082 745V780L1130 787M805 450L797 530L730 610L700 620L650 670L600 715Q570 760 570 800L573 906M597 718H520L470 670L440 655L415 632L390 630Q350 650 310 690L300 702L225 697L200 682H185M997 6L985 185L958 220L955 330L945 395M1115 6L1105 250L1000 350L975 395M1105 250L1155 205H1170M1165 374V420L1100 490V620L1145 730L1132 755L1130 906M145 523L185 525M88 6V150",
    trunk: "M-2 97L70 103L145 105L222 53L320 32L430 14L560 6",
  },
];

type Layer = { key: Exclude<keyof Sheet, "x">; name: string };
const LAYERS: Layer[] = [
  { key: "sand", name: "sand" },
  { key: "park", name: "park" },
  { key: "grey", name: "grey" },
  { key: "stream", name: "stream" },
  { key: "water", name: "water" },
  { key: "minor", name: "minor-case" },
  { key: "minor", name: "minor" },
  { key: "road", name: "road-case" },
  { key: "road", name: "road" },
  { key: "rail", name: "rail" },
  { key: "trunk", name: "trunk-case" },
  { key: "trunk", name: "trunk" },
  { key: "ramp", name: "ramp" },
  { key: "motorway", name: "motorway-case" },
  { key: "motorway", name: "motorway" },
];

const INTERSTATES: [number, number, string][] = [
  [296, 902, "40"], [397, 891, "40"], [179, 945, "40"], [91, 980, "40"], [625, 875, "40"],
  [1019, 795, "40"], [1256, 827, "40"], [761, 842, "40-55"], [825, 872, "55"], [909, 968, "55"],
  [1024, 1003, "240"], [1210, 943, "240"], [1202, 985, "240"],
  [1534, 824, "269"], [1547, 865, "269"], [1549, 960, "269"],
];
const US_ROUTES: [number, number, string][] = [[152, 959, "70"], [435, 1006, "79"], [1047, 873, "64-70"]];
const STATE_ROUTES: [number, number, string][] = [
  [73, 818, "306"], [308, 826, "149"], [564, 1019, "147"], [1319, 880, "177"], [1694, 878, "193"], [1835, 848, "195"], [1791, 725, ""],
];
const PLACES: [number, number, string, string][] = [
  [547, 742, "Crawfordsville", "town"],
  [431, 846, "Jennette", "town"],
  [568, 953, "Edmondson", "town"],
  [734, 762, "Marion", "city"],
  [752, 883, "West Memphis", "city"],
  [1204, 779, "Bartlett", "city"],
  [1297, 989, "Germantown", "city"],
  [1727, 736, "Oakland", "hamlet"],
  [1879, 1032, "Mos", "faint"],
  [945, 880, "Memphis", "capital"],
];

@customElement("city-map")
class CityMap extends LitElement {
  static styles = css`
    :host { display: block; position: relative; overflow: hidden; height: 300px; background: #efe9e1; }
    .canvas { display: block; width: 100%; height: 100%; }
    path { stroke-linejoin: round; }
    .park { fill: #b5e59b; }
    .sand { fill: #e6dfb9; }
    .grey { fill: #d0d2e0; }
    .water { fill: #75cff0; fill-rule: evenodd; }
    .stream { fill: none; stroke: #a9d6ec; stroke-width: 3; }
    .minor-case { fill: none; stroke: #dcdce8; stroke-width: 7; }
    .minor { fill: none; stroke: #fbfbfe; stroke-width: 4; }
    .road-case { fill: none; stroke: #d6d8e6; stroke-width: 10; }
    .road { fill: none; stroke: #fff; stroke-width: 7; }
    .rail { fill: none; stroke: #9aa0aa; stroke-width: 3; stroke-dasharray: 12 4; }
    .trunk-case { fill: none; stroke: #fff; stroke-width: 11; }
    .trunk { fill: none; stroke: #f3d060; stroke-width: 6; }
    .ramp { fill: none; stroke: #ffa45c; stroke-width: 3; }
    .motorway-case { fill: none; stroke: #fff; stroke-width: 12; }
    .motorway { fill: none; stroke: #ffa25a; stroke-width: 7; }
    text { text-anchor: middle; font-family: Roboto, "Liberation Sans", sans-serif; }
    .halo { paint-order: stroke; stroke: #f8f5f0; stroke-width: 2px; stroke-linejoin: round; }
    .town { font-size: 11px; fill: #444; }
    .hamlet { font-size: 13px; fill: #444; }
    .city { font-size: 14px; fill: #333; }
    .capital { font-size: 19px; font-weight: 500; fill: #111; }
    .faint { font-size: 10px; fill: #999; }
    .number { font-size: 9px; font-weight: 700; fill: #222; font-family: Inter, sans-serif; }
    .light { fill: #fff; }
    .brand { position: absolute; left: 7px; bottom: 6px; }
    .brand text { text-anchor: start; font-family: Lato, sans-serif; font-weight: 700; font-size: 17px; }
    .credits { position: absolute; right: 0; bottom: 0; display: flex; gap: 5px; height: 20px; padding: 0 5px; align-items: center; background: rgba(255,255,255,.5); font: 12px/20px "Liberation Sans", Arial, sans-serif; }
    .credits a { color: #404040; text-decoration: none; }
    .improve { font-weight: 700; }
  `;

  interstate([x, y, n]: [number, number, string]) {
    const w = n.length > 3 ? 18 : n.length > 2 ? 12 : 9;
    return svg`<g transform="translate(${x} ${y})">
      <path d="M${-w} -9Q${-w / 2} -7 0 -9Q${w / 2} -7 ${w} -9Q${w + 2} 5 0 9Q${-w - 2} 5 ${-w} -9Z" fill="#3f4ba6" stroke="#fff" stroke-width="1.500"/>
      <path d="M${-w} -9Q${-w / 2} -7 0 -9Q${w / 2} -7 ${w} -9V-5H${-w}Z" fill="#cc2a2a"/>
      <path d="M${-w} -4.500H${w}" stroke="#fff"/>
      <text class="number light" y="4">${n}</text></g>`;
  }

  usRoute([x, y, n]: [number, number, string]) {
    const w = n.length > 3 ? 18 : 9;
    return svg`<g transform="translate(${x} ${y})">
      <path d="M${-w + 2} -9Q${-w / 2} -6 0 -9Q${w / 2} -6 ${w - 2} -9L${w} -6Q${w - 2} -2 ${w} 2Q${w} 7 ${w / 2} 7Q3 7 0 9Q-3 7 ${-w / 2} 7Q${-w} 7 ${-w} 2Q${-w + 2} -2 ${-w} -6Z" fill="#fff" stroke="#222" stroke-width="1.200"/>
      <text class="number" y="3">${n}</text></g>`;
  }

  stateRoute([x, y, n]: [number, number, string]) {
    return svg`<g transform="translate(${x} ${y})">
      <ellipse rx="12.500" ry="9.500" fill="#fff" stroke="#222" stroke-width="1.200"/>
      ${n ? svg`<text class="number" y="3">${n}</text>` : null}</g>`;
  }

  render() {
    return html`
      <svg class="canvas" viewBox="15 732 1875 300" preserveAspectRatio="xMidYMid slice" role="img" aria-label="Map of Memphis">
        ${LAYERS.map((layer) =>
          SHEETS.map((sheet) =>
            sheet[layer.key]
              ? svg`<path class=${layer.name} transform="translate(${sheet.x} 730) scale(.33333)" d=${sheet[layer.key]!}></path>`
              : null
          )
        )}
        ${INTERSTATES.map((s) => this.interstate(s))}
        ${US_ROUTES.map((s) => this.usRoute(s))}
        ${STATE_ROUTES.map((s) => this.stateRoute(s))}
        ${PLACES.map(([x, y, name, kind]) => svg`<text class="halo ${kind}" x=${x} y=${y}>${name}</text>`)}
        <g transform="translate(939 847)">
          <ellipse cx="13.500" cy="35" rx="8" ry="4" fill="#000" opacity=".18" />
          <ellipse cx="13.500" cy="35" rx="4" ry="2" fill="#000" opacity=".3" />
          <path fill="#3fb1ce" d="M27 13.500C27 19.070 20.250 27 14.750 34.500C14.020 35.500 12.980 35.500 12.250 34.500C6.750 27 0 19.220 0 13.500C0 6.040 6.040 0 13.500 0C20.960 0 27 6.040 27 13.500Z" />
          <path d="M26.500 13.500C26.500 19 20 26.500 14.300 34.200Q13.500 35 12.700 34.200C7 26.500 .5 19 .5 13.500A13 13 0 0 1 26.500 13.500Z" fill="none" stroke="#000" stroke-opacity=".2" />
          <circle cx="13.500" cy="13.500" r="5.500" fill="#fff" />
        </g>
      </svg>
      <svg class="brand" width="90" height="24" viewBox="0 0 90 24" role="img" aria-label="Mapbox">
        <circle cx="11" cy="12" r="9.500" fill="#fff" stroke="#9b9791" stroke-width="1.300" />
        <path d="M7 16.500Q5.500 11 8.500 8.500T15 9Q17 12 14.500 14.500T7 16.500Z" fill="#9b9791" />
        <path d="m11.800 8 1 2.300 2.300 1-2.300 1-1 2.300-1-2.300-2.300-1 2.300-1z" fill="#fff" />
        <text x="23" y="17" fill="#fff" stroke="#9b9791" stroke-width="2" paint-order="stroke">mapbox</text>
      </svg>
      <div class="credits">
        <a href="#mapbox">© Mapbox</a><a href="#osm">© OpenStreetMap</a><a class="improve" href="#improve">Improve this map</a>
      </div>`;
  }
}

/* ---------- Page ---------- */

@customElement("app-root")
class AppRoot extends LitElement {
  static styles = css`
    :host { display: flex; flex-direction: column; min-height: 100vh; background: #fff; color: #212529; font: 16px/24px Inter, "Liberation Sans", sans-serif; }
    .view { flex: 1; display: flex; }
    .page { flex: 1; min-width: 0; padding: 0 14px 0 15px; }
    .track { box-sizing: border-box; width: 16px; padding: 60px 3px 3px 4px; background: #fafafa; border-left: 1px solid #e8e8e8; display: flex; }
    .thumb { flex: 1; border-radius: 4px; background: #c1c1c1; }
    .banner { padding: 4px 32px 63px; background: #add8e6; border-radius: 0 0 5px 5px; text-align: center; }
    h1 { margin: 0; font-size: 51px; line-height: 67px; font-weight: 300; }
    .pills { display: flex; justify-content: center; margin: 32px 0 24px; }
    .pill { padding: 8px 12px; border-radius: 4px; color: #007bff; text-decoration: none; }
    .pill.selected { background: #add8e6; }
    .controls { display: flex; justify-content: space-between; align-items: flex-start; }
    form { display: flex; align-items: center; gap: 4px; }
    input, select, form button { box-sizing: border-box; font: inherit; }
    input { width: 175px; height: 30px; padding: 1px 3px; border: 1px solid #767676; border-radius: 2px; color: #212529; }
    input::placeholder { color: #757575; }
    select { width: 48px; height: 22px; padding: 0; line-height: 20px; border: 1px solid #767676; border-radius: 3px; background: #fff; color: #000; }
    form button { height: 30px; padding: 1px 5px; background: #add8e6; color: #000; border: 2px solid; border-color: #767676 #212121 #212121 #767676; }
    .city { margin: 0; }
    h2 { margin: 0 0 19px; font-size: 26px; line-height: 34px; font-weight: 500; text-align: center; text-decoration: underline; }
    .forecast { display: flex; justify-content: center; padding-right: 30px; margin-bottom: 4px; }
    b { font-weight: 700; }
  `;

  render() {
    return html`
      <browser-frame></browser-frame>
      <div class="view">
        <main class="page">
          <div class="banner"><h1>SimpliWeather</h1></div>
          <nav class="pills">
            <a class=${classMap({ pill: true })} href="#current">Current Weather (Single City)</a>
            <a class=${classMap({ pill: true, selected: true })} href="#weekly">Weekly Forecast (Single City)</a>
          </nav>
          <div class="controls">
            <form @submit=${(e: Event) => e.preventDefault()}>
              <input type="text" placeholder="Search a city..." aria-label="Search a city" />
              <select aria-label="State"><option>AK</option><option>AL</option><option>TN</option></select>
              <button type="submit">SEARCH</button>
              <button type="reset">CLEAR</button>
            </form>
            <p class="city"><b>Current City:</b> 265 Court Avenue, Memphis, Tennessee 38103, United States</p>
          </div>
          <h2>WEEKLY FORECAST</h2>
          <section class="forecast">${DAYS.map((day) => html`<day-card .day=${day}></day-card>`)}</section>
          <city-map></city-map>
        </main>
        <div class="track"><div class="thumb"></div></div>
      </div>`;
  }
}
